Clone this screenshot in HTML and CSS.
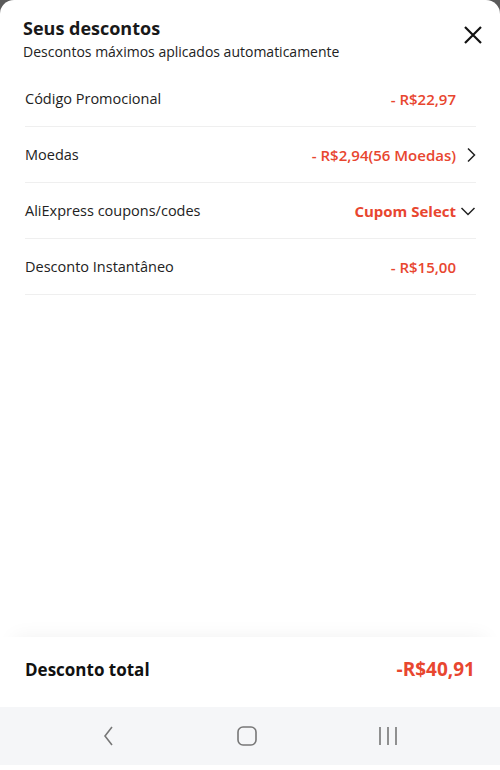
FILE: index.html
```html
<!DOCTYPE html>
<html lang="pt">
<head>
  <meta charset="UTF-8" />
  <meta name="viewport" content="width=device-width, initial-scale=1.0"/>
  <title>Seus descontos</title>
  <link rel="stylesheet" href="styles.css">
</head>
<body>
  <div class="sheet">
    <div class="header">
      <div>
        <h1>Seus descontos</h1>
        <p class="sub">Descontos máximos aplicados automaticamente</p>
      </div>
      <button class="close" aria-label="Fechar">
        <svg width="20" height="20" viewBox="0 0 20 20"><path d="M2 2 L18 18 M18 2 L2 18" stroke="#111" stroke-width="2.2" fill="none"/></svg>
      </button>
    </div>

    <ul class="list">
      <li class="row">
        <span class="label">Código Promocional</span>
        <span class="value">- R$22,97</span>
        <span class="icon"></span>
      </li>
      <li class="row">
        <span class="label">Moedas</span>
        <span class="value">- R$2,94(56 Moedas)</span>
        <span class="icon">
          <svg width="10" height="16" viewBox="0 0 10 16"><path d="M2 1.5 L8.5 8 L2 14.5" stroke="#222" stroke-width="1.5" fill="none"/></svg>
        </span>
      </li>
      <li class="row">
        <span class="label">AliExpress coupons/codes</span>
        <span class="value strong">Cupom Select</span>
        <span class="icon">
          <svg width="16" height="10" viewBox="0 0 16 10"><path d="M1.5 2 L8 8.5 L14.5 2" stroke="#222" stroke-width="1.5" fill="none"/></svg>
        </span>
      </li>
      <li class="row">
        <span class="label">Desconto Instantâneo</span>
        <span class="value">- R$15,00</span>
        <span class="icon"></span>
      </li>
    </ul>

    <div class="spacer"></div>

    <div class="total">
      <span>Desconto total</span>
      <span class="total-value">-R$40,91</span>
    </div>
  </div>

  <nav class="navbar">
    <svg width="16" height="24" viewBox="0 0 16 24"><path d="M12 3 L5 12 L12 21" stroke="#777" stroke-width="1.6" fill="none"/></svg>
    <svg width="22" height="22" viewBox="0 0 22 22"><rect x="2" y="2" width="18" height="18" rx="5" stroke="#777" stroke-width="1.6" fill="none"/></svg>
    <svg width="22" height="22" viewBox="0 0 22 22"><path d="M3 2 V20 M11 2 V20 M19 2 V20" stroke="#777" stroke-width="1.6" fill="none"/></svg>
  </nav>
  <div class="bottom"></div>
</body>
</html>
```

FILE: styles.css
```css
* {
  box-sizing: border-box;
}
html, body {
  margin: 0;
  padding: 0;
}
body {
  width: 500px;
  height: 770px;
  background-color: #5a5a5a;
  font-family: "Open Sans", Arial, sans-serif;
  color: #222;
  display: flex;
  flex-direction: column;
  overflow: hidden;
}
.sheet {
  flex: 1;
  background-color: #fff;
  border-radius: 14px 14px 0 0;
  display: flex;
  flex-direction: column;
}
.header {
  display: flex;
  justify-content: space-between;
  align-items: flex-start;
  padding: 15px 17px 0 23px;
}
h1 {
  margin: 0;
  font-size: 18px;
  font-weight: 700;
  line-height: 26px;
  color: #191919;
}
.sub {
  margin: 1px 0 0;
  font-size: 14px;
  line-height: 20px;
  color: #222;
}
.close {
  background: none;
  border: none;
  padding: 0;
  margin-top: 10px;
  cursor: pointer;
}
.list {
  list-style: none;
  margin: 9px 24px 0 25px;
  padding: 0;
}
.row {
  display: flex;
  align-items: center;
  height: 56px;
  border-bottom: 1px solid #efefef;
  font-size: 14.5px;
}
.label {
  flex: 1;
  color: #222;
  font-weight: 500;
}
.value {
  color: #e8462f;
  font-weight: 600;
  font-size: 15px;
}
.value.strong {
  font-weight: 700;
}
.icon {
  width: 20px;
  display: flex;
  justify-content: flex-end;
  align-items: center;
}
.spacer {
  flex: 1;
}
.total {
  display: flex;
  justify-content: space-between;
  align-items: center;
  height: 70px;
  padding: 0 25px 6px;
  font-size: 17px;
  font-weight: 700;
  color: #111;
  box-shadow: 0 -14px 20px -14px rgba(0,0,0,0.06);
}
.total-value {
  color: #e8462f;
  font-size: 19px;
}
.navbar {
  height: 58px;
  background-color: #f5f6f8;
  display: flex;
  align-items: center;
  justify-content: space-between;
  padding: 0 101px 0 100px;
}
.bottom {
  height: 5px;
  background-color: #fff;
}
```
